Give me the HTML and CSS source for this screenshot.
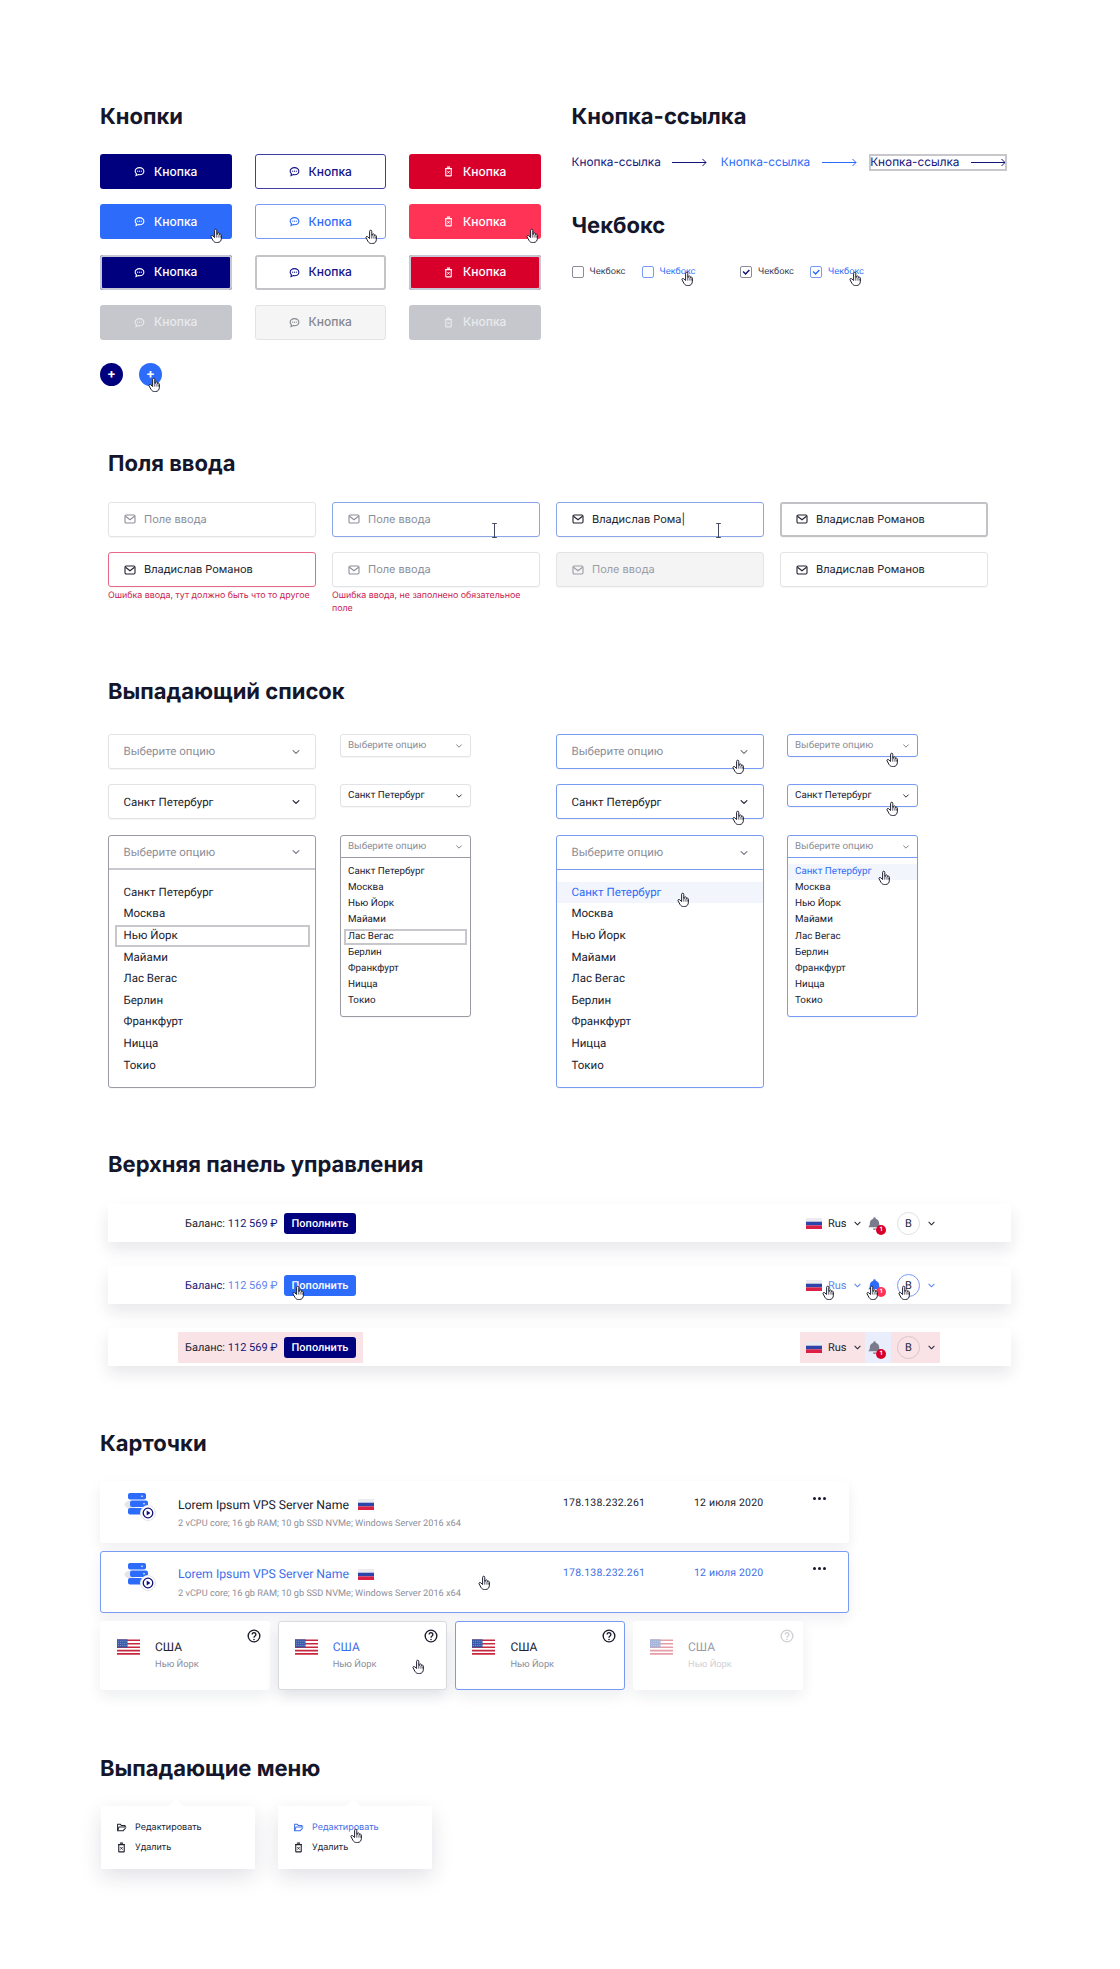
FILE: index.html
```html
<!DOCTYPE html>
<html lang="ru">
<head>
<meta charset="utf-8">
<title>UI Kit</title>
<link rel="stylesheet" href="styles.css">
</head>
<body>
<svg class="defs" width="0" height="0" aria-hidden="true">
  <symbol id="i-chat" viewBox="0 0 24 24"><path d="M12 3.5c-5.3 0-9.5 3.4-9.5 7.8 0 2.2 1 4 2.7 5.4L4.5 21l4.8-2.2c.9.2 1.8.3 2.7.3 5.3 0 9.5-3.4 9.5-7.8S17.300 3.500 12 3.500z" fill="none" stroke="currentColor" stroke-width="2.400"/><circle cx="8" cy="11.300" r="1.300" fill="currentColor"/><circle cx="12" cy="11.300" r="1.300" fill="currentColor"/><circle cx="16" cy="11.300" r="1.300" fill="currentColor"/></symbol>
  <symbol id="i-trash" viewBox="0 0 24 24"><path d="M8.500 2.500h7M4.500 5.500h15" stroke="currentColor" stroke-width="2.400" fill="none"/><rect x="6" y="6" width="12" height="15.500" rx="1" fill="none" stroke="currentColor" stroke-width="2.400"/><path d="M9.500 11l5 5.500m0-5.500l-5 5.500" stroke="currentColor" stroke-width="2"/></symbol>
  <symbol id="i-mail" viewBox="0 0 24 24"><rect x="2" y="4" width="20" height="16" rx="2.500" fill="none" stroke="currentColor" stroke-width="2.200"/><path d="M3 6.500l9 7 9-7" fill="none" stroke="currentColor" stroke-width="2.200"/></symbol>
  <symbol id="i-chev" viewBox="0 0 24 24"><path d="M5 8.500l7 7 7-7" fill="none" stroke="currentColor" stroke-width="2.800" stroke-linecap="round" stroke-linejoin="round"/></symbol>
  <symbol id="i-arrow" viewBox="0 0 35 9"><path d="M0 4.500h34M30.500 1l3.500 3.500L30.500 8" fill="none" stroke="currentColor" stroke-width="1"/></symbol>
  <symbol id="i-check" viewBox="0 0 12 12"><path d="M2.500 5.500l3 3 4.500-5" fill="none" stroke="currentColor" stroke-width="1.700"/></symbol>
  <symbol id="i-hand" viewBox="0 0 24 28"><path d="M8.500 3.500a2 2 0 0 1 4 0V11l1 .1V9.800a1.900 1.900 0 0 1 3.700-.3l.3 2a1.900 1.900 0 0 1 3.500 1.100V18c0 4.700-2.500 8-7 8h-2c-3 0-4.800-1.200-6.300-3.600L2 15.700c-1.100-2 1.500-3.700 3.100-2.100l3.400 3.200z" fill="#fff" stroke="#1b1c2c" stroke-width="1.800" stroke-linejoin="round"/><path d="M12.500 11v6M16.500 11.500V17M20 13v4" fill="none" stroke="#1b1c2c" stroke-width="1.400"/></symbol>
  <symbol id="i-ibeam" viewBox="0 0 7 16"><path d="M1 .5h5M3.500.5v15M1 15.500h5" fill="none" stroke="#3a3c55" stroke-width="1"/></symbol>
  <symbol id="i-bell" viewBox="0 0 24 24"><path d="M12 2a2 2 0 0 1 2 2v.4c3.500.9 5.500 3.800 5.500 7.600 0 3 .8 4.500 2.500 6H2c1.700-1.500 2.500-3 2.500-6 0-3.800 2-6.700 5.500-7.600V4a2 2 0 0 1 2-2zM9.500 20h5a2.500 2.500 0 0 1-5 0z" fill="currentColor"/></symbol>
  <symbol id="i-ru" viewBox="0 0 16 11"><rect width="16" height="3.700" fill="#ececf0"/><rect y="3.700" width="16" height="3.700" fill="#2b45a8"/><rect y="7.400" width="16" height="3.600" fill="#dc1f45"/></symbol>
  <symbol id="i-us" viewBox="0 0 24 16"><rect width="24" height="16" fill="#fff"/><path d="M0 1h24M0 4.600h24M0 8.200h24M0 11.800h24M0 15.200h24" stroke="#c8283f" stroke-width="1.700"/><rect width="11" height="8.500" fill="#3558a8"/><path d="M1 2h9.500M1 4.200h9.500M1 6.400h9.500" stroke="#9fb2e0" stroke-width=".8" stroke-dasharray="1 1"/></symbol>
  <symbol id="i-help" viewBox="0 0 24 24"><circle cx="12" cy="12" r="10" fill="none" stroke="currentColor" stroke-width="2.300"/><path d="M8.800 9.500a3.200 3.200 0 1 1 5 2.600c-1.200.8-1.800 1.400-1.800 2.700" fill="none" stroke="currentColor" stroke-width="2.300"/><circle cx="12" cy="18" r="1.400" fill="currentColor"/></symbol>
  <symbol id="i-folder" viewBox="0 0 24 24"><path d="M16 19H3.500V5h6l2 2.500H19.500V11" fill="none" stroke="currentColor" stroke-width="2.200"/><path d="M3.500 19l3-8h16M15 19.500l6-6" fill="none" stroke="currentColor" stroke-width="2.200"/></symbol>
  <symbol id="i-server" viewBox="0 0 32 28"><ellipse cx="7" cy="11.500" rx="6.500" ry="4" fill="#e3e5ea"/><rect x="4" y="0" width="18" height="6.500" rx="2" fill="#2d6bfa"/><rect x="6" y="7.500" width="18" height="6.500" rx="2" fill="#2d6bfa"/><rect x="4" y="15" width="18" height="6.500" rx="2" fill="#2d6bfa"/><circle cx="18" cy="3.300" r=".8" fill="#fff"/><circle cx="20" cy="10.800" r=".8" fill="#fff"/><circle cx="24" cy="20" r="7.500" fill="#fff" stroke="#e3e5ea"/><circle cx="24" cy="20" r="4.800" fill="none" stroke="#101078" stroke-width="1.300"/><path d="M22.700 17.600l3.700 2.400-3.700 2.400z" fill="#101078"/></symbol>
</svg>

<main class="page">

  <section class="top">
    <div class="col-buttons">
      <h2 class="title">Кнопки</h2>
      <div class="btn-grid">
        <button class="btn navy"><svg class="ic11"><use href="#i-chat"/></svg>Кнопка</button>
        <button class="btn line"><svg class="ic11"><use href="#i-chat"/></svg>Кнопка</button>
        <button class="btn red"><svg class="ic11"><use href="#i-trash"/></svg>Кнопка</button>

        <button class="btn blue"><svg class="ic11"><use href="#i-chat"/></svg>Кнопка<svg class="cur cur-b1"><use href="#i-hand"/></svg></button>
        <button class="btn line-h"><svg class="ic11"><use href="#i-chat"/></svg>Кнопка<svg class="cur cur-b2"><use href="#i-hand"/></svg></button>
        <button class="btn pink"><svg class="ic11"><use href="#i-trash"/></svg>Кнопка<svg class="cur cur-b3"><use href="#i-hand"/></svg></button>

        <button class="btn navy focus"><svg class="ic11"><use href="#i-chat"/></svg>Кнопка</button>
        <button class="btn line-f"><svg class="ic11"><use href="#i-chat"/></svg>Кнопка</button>
        <button class="btn red focus"><svg class="ic11"><use href="#i-trash"/></svg>Кнопка</button>

        <button class="btn dis"><svg class="ic11"><use href="#i-chat"/></svg>Кнопка</button>
        <button class="btn line-d"><svg class="ic11"><use href="#i-chat"/></svg>Кнопка</button>
        <button class="btn dis"><svg class="ic11"><use href="#i-trash"/></svg>Кнопка</button>
      </div>
      <div class="fabs">
        <span class="fab navy">+</span>
        <span class="fab blue">+<svg class="cur cur-fab"><use href="#i-hand"/></svg></span>
      </div>
    </div>

    <div class="col-links">
      <h2 class="title">Кнопка-ссылка</h2>
      <div class="links">
        <a class="link">Кнопка-ссылка<svg class="arrow"><use href="#i-arrow"/></svg></a>
        <a class="link link-h">Кнопка-ссылка<svg class="arrow"><use href="#i-arrow"/></svg></a>
        <a class="link link-f">Кнопка-ссылка<svg class="arrow"><use href="#i-arrow"/></svg></a>
      </div>
      <h2 class="title title-check">Чекбокс</h2>
      <div class="checks">
        <label class="check"><span class="box"></span>Чекбокс</label>
        <label class="check check-h"><span class="box"></span>Чекбокс<svg class="cur cur-check"><use href="#i-hand"/></svg></label>
        <label class="check check-on"><span class="box"><svg class="tick"><use href="#i-check"/></svg></span>Чекбокс</label>
        <label class="check check-h check-on"><span class="box"><svg class="tick"><use href="#i-check"/></svg></span>Чекбокс<svg class="cur cur-check"><use href="#i-hand"/></svg></label>
      </div>
    </div>
  </section>

  <section class="sec sec-inputs">
    <h2 class="title">Поля ввода</h2>
    <div class="field-grid">
      <div class="field-cell"><div class="field"><svg class="ic11"><use href="#i-mail"/></svg>Поле ввода</div></div>
      <div class="field-cell"><div class="field field-h"><svg class="ic11"><use href="#i-mail"/></svg>Поле ввода<svg class="ibeam"><use href="#i-ibeam"/></svg></div></div>
      <div class="field-cell"><div class="field field-h filled"><svg class="ic11"><use href="#i-mail"/></svg>Владислав Рома|<svg class="ibeam"><use href="#i-ibeam"/></svg></div></div>
      <div class="field-cell"><div class="field field-f filled"><svg class="ic11"><use href="#i-mail"/></svg>Владислав Романов</div></div>

      <div class="field-cell"><div class="field field-e filled"><svg class="ic11"><use href="#i-mail"/></svg>Владислав Романов</div><p class="err">Ошибка ввода, тут должно быть что то другое</p></div>
      <div class="field-cell"><div class="field"><svg class="ic11"><use href="#i-mail"/></svg>Поле ввода</div><p class="err">Ошибка ввода, не заполнено обязательное поле</p></div>
      <div class="field-cell"><div class="field field-d"><svg class="ic11"><use href="#i-mail"/></svg>Поле ввода</div></div>
      <div class="field-cell"><div class="field filled"><svg class="ic11"><use href="#i-mail"/></svg>Владислав Романов</div></div>
    </div>
  </section>

  <section class="sec sec-select">
    <h2 class="title">Выпадающий список</h2>
    <div class="sel-grid">
      <div class="sel"><div class="sel-head ph">Выберите опцию<svg class="chev"><use href="#i-chev"/></svg></div></div>
      <div class="sel sm"><div class="sel-head ph">Выберите опцию<svg class="chev"><use href="#i-chev"/></svg></div></div>
      <div class="sel hov"><div class="sel-head ph">Выберите опцию<svg class="chev"><use href="#i-chev"/></svg></div><svg class="cur cur-s1"><use href="#i-hand"/></svg></div>
      <div class="sel sm hov"><div class="sel-head ph">Выберите опцию<svg class="chev"><use href="#i-chev"/></svg></div><svg class="cur cur-s2"><use href="#i-hand"/></svg></div>

      <div class="sel"><div class="sel-head">Санкт Петербург<svg class="chev"><use href="#i-chev"/></svg></div></div>
      <div class="sel sm"><div class="sel-head">Санкт Петербург<svg class="chev"><use href="#i-chev"/></svg></div></div>
      <div class="sel hov"><div class="sel-head">Санкт Петербург<svg class="chev"><use href="#i-chev"/></svg></div><svg class="cur cur-s3"><use href="#i-hand"/></svg></div>
      <div class="sel sm hov"><div class="sel-head">Санкт Петербург<svg class="chev"><use href="#i-chev"/></svg></div><svg class="cur cur-s4"><use href="#i-hand"/></svg></div>

      <div class="sel open">
        <div class="sel-head ph">Выберите опцию<svg class="chev"><use href="#i-chev"/></svg></div>
        <ul class="opts">
          <li>Санкт Петербург</li><li>Москва</li><li class="opt-f">Нью Йорк</li><li>Майами</li><li>Лас Вегас</li><li>Берлин</li><li>Франкфурт</li><li>Ницца</li><li>Токио</li>
        </ul>
      </div>
      <div class="sel sm open">
        <div class="sel-head ph">Выберите опцию<svg class="chev"><use href="#i-chev"/></svg></div>
        <ul class="opts">
          <li>Санкт Петербург</li><li>Москва</li><li>Нью Йорк</li><li>Майами</li><li class="opt-f">Лас Вегас</li><li>Берлин</li><li>Франкфурт</li><li>Ницца</li><li>Токио</li>
        </ul>
      </div>
      <div class="sel hov open">
        <div class="sel-head ph">Выберите опцию<svg class="chev"><use href="#i-chev"/></svg></div>
        <ul class="opts">
          <li class="opt-h">Санкт Петербург</li><li>Москва</li><li>Нью Йорк</li><li>Майами</li><li>Лас Вегас</li><li>Берлин</li><li>Франкфурт</li><li>Ницца</li><li>Токио</li>
        </ul>
        <svg class="cur cur-s5"><use href="#i-hand"/></svg>
      </div>
      <div class="sel sm hov open">
        <div class="sel-head ph">Выберите опцию<svg class="chev"><use href="#i-chev"/></svg></div>
        <ul class="opts">
          <li class="opt-h">Санкт Петербург</li><li>Москва</li><li>Нью Йорк</li><li>Майами</li><li>Лас Вегас</li><li>Берлин</li><li>Франкфурт</li><li>Ницца</li><li>Токио</li>
        </ul>
        <svg class="cur cur-s6"><use href="#i-hand"/></svg>
      </div>
    </div>
  </section>

  <section class="sec sec-bars">
    <h2 class="title">Верхняя панель управления</h2>
    <div class="bars">
      <div class="bar">
        <div class="bal"><span class="bal-l">Баланс: <b>112 569 ₽</b></span><span class="pay">Пополнить</span></div>
        <div class="bar-right">
          <div class="lang"><svg class="flag"><use href="#i-ru"/></svg>Rus<svg class="chev"><use href="#i-chev"/></svg></div>
          <div class="bell"><svg class="bell-ic"><use href="#i-bell"/></svg><span class="badge">1</span></div>
          <div class="user"><span class="ava">B</span><svg class="chev"><use href="#i-chev"/></svg></div>
        </div>
      </div>
      <div class="bar bar-h">
        <div class="bal"><span class="bal-l">Баланс: <b>112 569 ₽</b></span><span class="pay">Пополнить</span></div>
        <div class="bar-right">
          <div class="lang"><svg class="flag"><use href="#i-ru"/></svg>Rus<svg class="chev"><use href="#i-chev"/></svg></div>
          <div class="bell"><svg class="bell-ic"><use href="#i-bell"/></svg><span class="badge">1</span></div>
          <div class="user"><span class="ava">B</span><svg class="chev"><use href="#i-chev"/></svg></div>
        </div>
        <svg class="cur cur-t1"><use href="#i-hand"/></svg>
        <svg class="cur cur-t2"><use href="#i-hand"/></svg>
        <svg class="cur cur-t3"><use href="#i-hand"/></svg>
        <svg class="cur cur-t4"><use href="#i-hand"/></svg>
      </div>
      <div class="bar bar-a">
        <div class="bal"><span class="bal-l">Баланс: <b>112 569 ₽</b></span><span class="pay">Пополнить</span></div>
        <div class="bar-right">
          <div class="lang"><svg class="flag"><use href="#i-ru"/></svg>Rus<svg class="chev"><use href="#i-chev"/></svg></div>
          <div class="bell"><svg class="bell-ic"><use href="#i-bell"/></svg><span class="badge">1</span></div>
          <div class="user"><span class="ava">B</span><svg class="chev"><use href="#i-chev"/></svg></div>
        </div>
      </div>
    </div>
  </section>

  <section class="sec-wide sec-cards">
    <h2 class="title">Карточки</h2>
    <div class="vps-list">
      <article class="vps">
        <svg class="srv"><use href="#i-server"/></svg>
        <div class="vps-main">
          <div class="vps-name">Lorem Ipsum VPS Server Name<svg class="flag"><use href="#i-ru"/></svg></div>
          <p class="vps-sub">2 vCPU core; 16 gb RAM; 10 gb SSD NVMe; Windows Server 2016 x64</p>
        </div>
        <span class="vps-ip">178.138.232.261</span>
        <span class="vps-date">12 июля 2020</span>
        <span class="dots"><i></i><i></i><i></i></span>
      </article>
      <article class="vps vps-h">
        <svg class="srv"><use href="#i-server"/></svg>
        <div class="vps-main">
          <div class="vps-name">Lorem Ipsum VPS Server Name<svg class="flag"><use href="#i-ru"/></svg></div>
          <p class="vps-sub">2 vCPU core; 16 gb RAM; 10 gb SSD NVMe; Windows Server 2016 x64</p>
        </div>
        <span class="vps-ip">178.138.232.261</span>
        <span class="vps-date">12 июля 2020</span>
        <span class="dots"><i></i><i></i><i></i></span>
        <svg class="cur cur-v"><use href="#i-hand"/></svg>
      </article>
    </div>
    <div class="loc-grid">
      <article class="loc"><svg class="us"><use href="#i-us"/></svg><div><h3>США</h3><p>Нью Йорк</p></div><svg class="help"><use href="#i-help"/></svg></article>
      <article class="loc loc-h"><svg class="us"><use href="#i-us"/></svg><div><h3>США</h3><p>Нью Йорк</p></div><svg class="help"><use href="#i-help"/></svg><svg class="cur cur-l"><use href="#i-hand"/></svg></article>
      <article class="loc loc-s"><svg class="us"><use href="#i-us"/></svg><div><h3>США</h3><p>Нью Йорк</p></div><svg class="help"><use href="#i-help"/></svg></article>
      <article class="loc loc-d"><svg class="us"><use href="#i-us"/></svg><div><h3>США</h3><p>Нью Йорк</p></div><svg class="help"><use href="#i-help"/></svg></article>
    </div>
  </section>

  <section class="sec-wide sec-menus">
    <h2 class="title">Выпадающие меню</h2>
    <div class="menus">
      <div class="menu">
        <div class="menu-item"><svg class="ic11"><use href="#i-folder"/></svg>Редактировать</div>
        <div class="menu-item"><svg class="ic11"><use href="#i-trash"/></svg>Удалить</div>
      </div>
      <div class="menu">
        <div class="menu-item menu-h"><svg class="ic11"><use href="#i-folder"/></svg>Редактировать</div>
        <div class="menu-item"><svg class="ic11"><use href="#i-trash"/></svg>Удалить</div>
        <svg class="cur cur-m"><use href="#i-hand"/></svg>
      </div>
    </div>
  </section>
</main>
</body>
</html>
```

FILE: styles.css
```css
* { box-sizing: border-box; }
html, body { margin: 0; padding: 0; background: #fff; }
body { font-family: Inter, "Liberation Sans", sans-serif; color: #14162b; text-rendering: geometricPrecision; }
.defs { position: absolute; }
ul { list-style: none; margin: 0; padding: 0; }
p, h2, h3 { margin: 0; }
.page { width: 1120px; height: 1969px; overflow: hidden; }

.title { height: 30px; padding-top: 1px; font: 700 22px/30px Inter, sans-serif; color: #14162b; }
.ic11 { width: 11px; height: 11px; flex: none; }
.cur { position: absolute; width: 13px; height: 16px; z-index: 3; }

/* Top */
.top { display: flex; padding: 101px 0 0 100px; }
.col-buttons { width: 471.500px; }
.btn-grid { display: grid; grid-template-columns: repeat(3, 131.500px); column-gap: 23px; row-gap: 15.300px; margin-top: 23px; }
.btn { position: relative; height: 35px; display: flex; align-items: center; justify-content: center; gap: 9px; padding: 0; border: 0; border-radius: 3px; font: 500 12px/1 Inter, sans-serif; background: #fff; }
.btn.navy { background: #00007f; color: #fff; }
.btn.blue { background: #2d6bfa; color: #fff; }
.btn.red { background: #d8002a; color: #fff; }
.btn.pink { background: #ff3355; color: #fff; }
.btn.focus { box-shadow: inset 0 0 0 2px #c6c8d6; }
.btn.dis { background: #c5c7cc; color: #e9eaed; }
.btn.line { border: 1px solid #3f3fa3; color: #12128a; }
.btn.line-h { border: 1px solid #7a9bf3; color: #2d6bfa; }
.btn.line-f { border: 2px solid #c4c4c8; color: #12128a; }
.btn.line-d { background: #f5f5f6; border: 1px solid #e2e3e6; color: #85878f; }
.cur-b1 { left: 110px; top: 24px; }
.cur-b2 { left: 109px; top: 24px; }
.cur-b3 { left: 117px; top: 24px; }
.fabs { display: flex; gap: 16px; margin-top: 23px; }
.fab { position: relative; width: 23px; height: 23px; border-radius: 50%; color: #fff; display: flex; align-items: center; justify-content: center; font: 700 13px/1 Inter, sans-serif; }
.fab.navy { background: #00007f; }
.fab.blue { background: #2d6bfa; }
.cur-fab { left: 9px; top: 14px; }

.links { display: flex; gap: 13.500px; margin-top: 24px; }
.link { display: flex; align-items: center; gap: 11.500px; font: 400 11.800px/15px Inter, sans-serif; color: #14147a; }
.link-h { color: #2d6bfa; }
.link-f { outline: 2px solid #c8c8cc; outline-offset: -1px; }
.arrow { width: 35px; height: 9px; }
.title-check { margin-top: 40px; }
.checks { display: flex; margin-top: 25px; }
.check { position: relative; display: flex; align-items: center; gap: 6px; height: 13px; width: 70px; font: 400 8.800px/13px Inter, sans-serif; color: #33354a; }
.check:nth-child(3) { margin-left: 28.500px; }
.box { width: 12px; height: 12px; border: 1px solid #8b8c96; border-radius: 2px; display: flex; }
.check-h { color: #2d6bfa; }
.check-h .box { border-color: #7a9bf3; }
.check-on .box { color: #10107a; }
.check-on.check-h .box { color: #2d6bfa; }
.tick { width: 10px; height: 10px; }
.cur-check { left: 39px; top: 6px; }

/* Sections */
.sec { padding-left: 108px; }
.sec-wide { padding-left: 100px; }
.sec-inputs { margin-top: 62px; }
.field-grid { display: grid; grid-template-columns: repeat(4, 208px); column-gap: 16px; row-gap: 15.500px; margin-top: 24px; }
.field { position: relative; height: 35px; border: 1px solid #e3e4e7; border-radius: 3px; display: flex; align-items: center; gap: 8px; padding-left: 15px; font: 400 11px/1 Inter, sans-serif; color: #8c8e99; box-shadow: 0 1px 1px rgba(20, 22, 43, .04); }
.field .ic11 { width: 12px; height: 12px; }
.field.filled { color: #20222f; }
.field-h { border-color: #8aa6e6; }
.field-f { border: 2px solid #c2c2c6; padding-left: 14px; }
.field-e { border-color: #e9688a; }
.field-d { background: #f4f4f5; color: #9b9ca5; }
.ibeam { position: absolute; left: 158px; top: 20px; width: 7px; height: 15px; }
.err { margin-top: 3px; font: 400 8.850px/12.500px Inter, sans-serif; color: #c9204e; }

.sec-select { margin-top: 60.500px; }
.sel-grid { display: grid; grid-template-columns: 208px 131px 208px 131px; column-gap: 24px; grid-template-rows: 34.500px 34.500px auto; row-gap: 16px; margin-top: 28px; align-items: start; }
.sel-grid > :nth-child(4n + 3) { margin-left: 61px; }
.sel-grid > :nth-child(4n + 4) { margin-left: 60px; }
.sel { position: relative; border: 1px solid #e2e3e7; border-radius: 3px; background: #fff; font: 400 11.500px/1 Roboto, sans-serif; color: #20222f; box-shadow: 0 1px 1px rgba(20, 22, 43, .04); width: 208px; }
.sel.sm { width: 131px; font-size: 9.800px; }
.sel.hov { border-color: #7a9bf3; }
.sel.open { border-color: #9a9ba3; }
.sel.hov.open { border-color: #7a9bf3; }
.sel-head { height: 33px; display: flex; align-items: center; justify-content: space-between; padding: 1px 14px 0 14.500px; }
.sel.sm .sel-head { height: 21px; padding: 1px 7px 0 7px; }
.sel-head.ph { color: #8c8e99; }
.chev { width: 10px; height: 10px; flex: none; color: #20222f; }
.sel-head.ph .chev { color: #777986; }
.sel.sm .chev { width: 8px; height: 8px; }
.sel.open .sel-head { border-bottom: 2px solid #c8c9ce; height: 34px; }
.sel.sm.open .sel-head { border-bottom: 1px solid #9a9ba3; height: 22px; }
.sel.hov.open .sel-head { border-bottom: 1px solid #7a9bf3; }
.opts { padding: 12px 0 11px; }
.opts li { height: 21.600px; line-height: 21.600px; padding-left: 14.500px; position: relative; }
.sel.sm .opts { padding: 6px 0; }
.sel.sm .opts li { height: 16.200px; line-height: 16.200px; padding-left: 7px; }
.opt-f { outline: 2px solid #c8c8cc; outline-offset: -2px; margin: 0 5px 0 6px; padding-left: 8.500px !important; }
.sel.sm .opt-f { margin: 0 3px; padding-left: 4px !important; }
.opt-h { background: #f2f5fc; color: #2d6bfa; }
.cur-s1 { left: 175px; top: 24px; }
.cur-s2 { left: 98px; top: 17px; }
.cur-s3 { left: 175px; top: 25px; }
.cur-s4 { left: 98px; top: 16px; }
.cur-s5 { left: 120px; top: 56px; }
.cur-s6 { left: 90px; top: 34px; }

.sec-bars { margin-top: 61px; }
.bars { display: flex; flex-direction: column; gap: 24px; margin-top: 25px; }
.bar { position: relative; width: 903px; height: 38px; display: flex; align-items: center; justify-content: space-between; padding: 0 71px 0 70px; background: #fff; box-shadow: 0 8px 16px rgba(30, 32, 70, .1); font: 400 11px/1 Roboto, sans-serif; color: #20222f; }
.bal { display: flex; align-items: center; height: 31px; gap: 8px; padding: 0 7px; }
.bal-l { width: 91px; white-space: nowrap; }
.bal-l b { font-weight: 400; color: #14147a; }
.pay { width: 72px; height: 21px; border-radius: 3px; background: #00007f; color: #fff; display: flex; align-items: center; justify-content: center; font: 500 11px/1 Roboto, sans-serif; }
.bar-right { display: flex; align-items: center; height: 31px; }
.lang, .bell, .user { display: flex; align-items: center; height: 31px; }
.lang { padding-left: 6px; gap: 6px; width: 65px; }
.flag { width: 16px; height: 11px; flex: none; }
.lang .chev, .user .chev { width: 9px; height: 9px; color: #2a2c3c; }
.bell { position: relative; width: 26px; padding-left: 2px; }
.bell-ic { width: 15px; height: 17px; color: #7a7c8c; }
.badge { position: absolute; left: 11px; top: 17px; width: 10px; height: 10px; border-radius: 50%; background: #d8002a; color: #fff; font: 700 6px/10px Inter, sans-serif; text-align: center; }
.user { padding-left: 6px; gap: 7px; width: 49px; }
.ava { width: 23px; height: 23px; border: 1px solid #dfe0e4; border-radius: 50%; display: flex; align-items: center; justify-content: center; font-size: 11px; flex: none; }
.bar-h .bal-l { color: #14147a; }
.bar-h .bal-l b { color: #5f86ee; }
.bar-h .pay { background: #2d6bfa; }
.bar-h .lang { color: #5f86ee; }
.bar-h .lang .chev, .bar-h .user .chev { color: #5f86ee; }
.bar-h .bell-ic { color: #2d6bfa; }
.bar-h .badge { background: #ff3355; }
.bar-h .ava { border-color: #7a9bf3; }
.bar-a .bal, .bar-a .lang, .bar-a .user { background: #f9e3e6; }
.bar-a .bell { background: #e8eefb; }
.bar-a .ava { border-color: #d9c5c9; }
.cur-t1 { left: 184px; top: 19px; }
.cur-t2 { left: 714px; top: 19px; }
.cur-t3 { left: 758px; top: 19px; }
.cur-t4 { left: 790px; top: 19px; }

.sec-cards { margin-top: 62px; }
.vps-list { display: flex; flex-direction: column; gap: 7.500px; margin-top: 23px; width: 749px; }
.vps { position: relative; height: 62px; display: flex; align-items: flex-start; padding: 11px 0 0 23px; background: #fff; border: 1px solid transparent; border-radius: 3px; box-shadow: 0 6px 14px rgba(30, 32, 70, .07); font: 400 10.500px/1 Roboto, sans-serif; color: #20222f; }
.srv { width: 32px; height: 28px; flex: none; }
.vps-main { width: 385px; margin-left: 22px; }
.vps-name { display: flex; align-items: center; gap: 9px; height: 14px; margin-top: 4.500px; font-size: 12.250px; line-height: 14px; }
.vps-sub { margin-top: 5.500px; font-size: 9.200px; line-height: 13px; color: #8c8e99; }
.vps-ip { width: 131px; margin-top: 5px; letter-spacing: .2px; }
.vps-date { width: 119px; margin-top: 5px; letter-spacing: .2px; }
.dots { display: flex; gap: 2px; margin-top: 4px; }
.dots i { width: 3px; height: 3px; border-radius: 50%; background: #14162b; }
.vps-h { border-color: #7a9bf3; }
.vps-h .vps-name, .vps-h .vps-ip, .vps-h .vps-date { color: #3e6fe8; }
.cur-v { left: 377px; top: 23px; }

.loc-grid { display: grid; grid-template-columns: repeat(4, 169.500px); column-gap: 8.200px; margin-top: 8px; }
.loc { position: relative; height: 69px; display: flex; gap: 15px; padding: 17px 0 0 16px; background: #fff; border: 1px solid transparent; border-radius: 3px; box-shadow: 0 6px 14px rgba(30, 32, 70, .08); }
.us { width: 23px; height: 16px; flex: none; }
.loc h3 { font: 400 12px/16px Roboto, sans-serif; color: #20222f; }
.loc p { margin-top: 4px; font: 400 9.300px/12px Roboto, sans-serif; color: #8c8e99; }
.help { position: absolute; right: 8px; top: 7px; width: 14px; height: 14px; color: #1a1b2a; }
.loc-h { border-color: #d9dadd; box-shadow: 0 6px 14px rgba(30, 32, 70, .14); }
.loc-h h3 { color: #3e6fe8; }
.loc-s { border-color: #7a9bf3; }
.loc-d .us { opacity: .45; }
.loc-d h3 { color: #9a9ca6; }
.loc-d p { color: #cfd0d5; }
.loc-d .help { color: #cfd0d5; }
.cur-l { left: 133px; top: 37px; }

.sec-menus { margin-top: 63px; }
.menus { display: flex; gap: 23px; margin-top: 23px; padding-left: 1px; }
.menu { position: relative; width: 154px; height: 63px; padding: 12px 0 0 15px; background: #fff; box-shadow: 0 8px 20px rgba(30, 32, 70, .13); }
.menu::before { content: ""; position: absolute; left: 70px; top: -5px; width: 10px; height: 10px; background: #fff; transform: rotate(45deg); }
.menu-item { position: relative; display: flex; align-items: center; gap: 8px; height: 20px; font: 400 9px/1 Inter, sans-serif; color: #20222f; }
.menu-h { color: #3e6fe8; }
.cur-m { left: 72px; top: 22px; }
```
